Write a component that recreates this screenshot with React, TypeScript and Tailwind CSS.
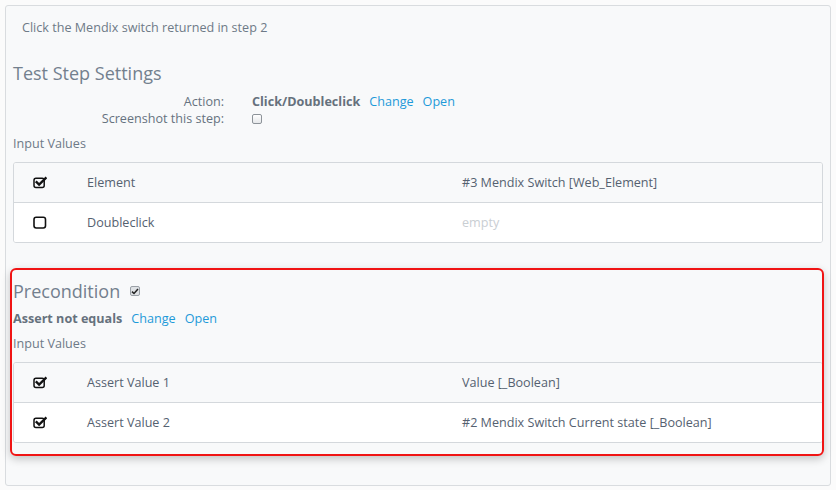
// Test step detail panel — settings, input values and the precondition block
// (the precondition is called out with a red annotation frame).

type Row = { checked: boolean; name: string; value: string };

const stepRows: Row[] = [
  { checked: true, name: "Element", value: "#3 Mendix Switch [Web_Element]" },
  { checked: false, name: "Doubleclick", value: "" },
];

const preconditionRows: Row[] = [
  { checked: true, name: "Assert Value 1", value: "Value [_Boolean]" },
  { checked: true, name: "Assert Value 2", value: "#2 Mendix Switch Current state [_Boolean]" },
];

function CheckSquare() {
  return (
    <svg width="14" height="13" viewBox="0 0 14 13" className="block">
      <rect x="1" y="2.2" width="10.2" height="9.3" rx="2" fill="none" stroke="#111" strokeWidth="1.5" />
      <path d="M3.6 6.2 L6.1 8.6 L12.6 2.2" fill="none" stroke="#111" strokeWidth="2.3" strokeLinecap="square" />
    </svg>
  );
}

function EmptySquare() {
  return (
    <svg width="14" height="13" viewBox="0 0 14 13" className="block">
      <rect x="1" y="1.2" width="11.5" height="10.8" rx="2.2" fill="none" stroke="#111" strokeWidth="1.6" />
    </svg>
  );
}

function ValuesTable({ rows }: { rows: Row[] }) {
  return (
    <div className="overflow-hidden rounded-[3px] border border-[#d4d8dc] bg-white">
      {rows.map((r, i) => (
        <div
          key={r.name}
          className={`flex h-[39px] items-center ${i > 0 ? "h-[40px] border-t border-[#d4d8dc]" : ""} ${i % 2 === 0 ? "bg-[#f8f9fa]" : "bg-white"}`}
        >
          <div className="w-[73px] pl-[19px]">{r.checked ? <CheckSquare /> : <EmptySquare />}</div>
          <div className="w-[375px] text-[#556170]">{r.name}</div>
          <div className={r.value ? "text-[#556170]" : "text-[#c9ced3]"}>{r.value || "empty"}</div>
        </div>
      ))}
    </div>
  );
}

function Links() {
  return (
    <>
      <span className="ml-[9px] text-[#1e9ad9]">Change</span>
      <span className="ml-[9px] text-[#1e9ad9]">Open</span>
    </>
  );
}

export default function App() {
  return (
    <div className="h-[490px] w-[836px] bg-[#fbfbfb] pt-[5px] pl-[5px] font-['Open_Sans',sans-serif] text-[12.6px] leading-[18px]">
      <div className="h-[481px] w-[826px] rounded-[3px] border border-[#d9dcdf] bg-[#f8f9fa] px-[7px]">
        <p className="mt-[13px] pl-[9px] text-[#6e7a87]">Click the Mendix switch returned in step 2</p>

        <h2 className="mt-[22px] text-[18px] leading-[28px] text-[#73808e]">Test Step Settings</h2>

        <div className="mt-[6px] grid grid-cols-[211px_1fr] gap-x-[28px] leading-[17px]">
          <span className="text-right text-[#66727f]">Action:</span>
          <span>
            <b className="font-bold text-[#66717d]">Click/Doubleclick</b>
            <Links />
          </span>
          <span className="text-right text-[#66727f]">Screenshot this step:</span>
          <span className="flex h-[17px] items-center">
            <span className="block h-[10px] w-[10px] rounded-[2px] border border-[#8d9399] bg-gradient-to-b from-white to-[#e6e8ea]" />
          </span>
        </div>

        <p className="mt-[8px] text-[#6e7a87]">Input Values</p>
        <div className="mt-[9px]">
          <ValuesTable rows={stepRows} />
        </div>

        <div className="relative mt-[34px]">
          <div className="pointer-events-none absolute top-[-9px] right-[-1px] bottom-[-13px] left-[-3px] rounded-[6px] border-2 border-[#f01414] shadow-[0_3px_8px_rgba(0,0,0,0.22)]" />
          <h2 className="flex items-center text-[18px] leading-[28px] text-[#73808e]">
            Precondition
            <span className="ml-[10px] flex h-[10px] w-[10px] items-center justify-center rounded-[2px] border border-[#9aa0a6] bg-[#dfe2e5]">
              <svg width="8" height="7" viewBox="0 0 8 7">
                <path d="M1 3.6 L3 5.5 L7 1" fill="none" stroke="#222" strokeWidth="1.5" />
              </svg>
            </span>
          </h2>
          <p className="mt-[5px]">
            <b className="font-bold text-[#66717d]">Assert not equals</b>
            <Links />
          </p>
          <p className="mt-[7px] text-[#6e7a87]">Input Values</p>
          <div className="mt-[9px]">
            <ValuesTable rows={preconditionRows} />
          </div>
        </div>
      </div>
    </div>
  );
}
